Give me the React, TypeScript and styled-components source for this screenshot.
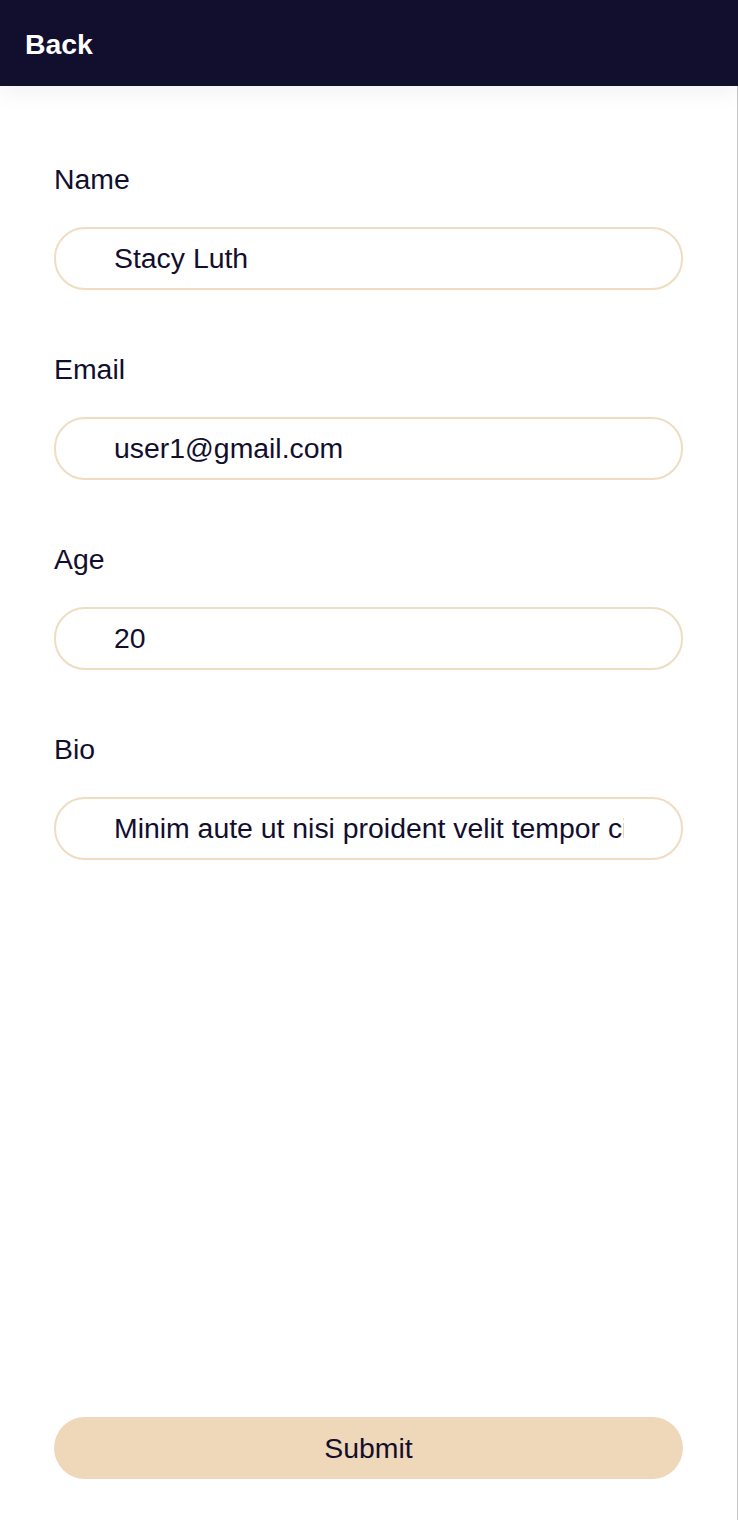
import React from "react";
import styled, { createGlobalStyle } from "styled-components";

const GlobalStyle = createGlobalStyle`
  html, body {
    margin: 0;
    padding: 0;
    background: #ffffff;
  }
  body {
    font-family: "Liberation Sans", Arial, Helvetica, sans-serif;
  }
  * { box-sizing: border-box; }
`;

const Page = styled.div`
  width: 738px;
  min-height: 1520px;
  display: flex;
  flex-direction: column;
  background: #ffffff;
`;

const Header = styled.header`
  height: 86px;
  background: #120e2e;
  display: flex;
  align-items: center;
  padding: 0 25px;
  box-shadow: 0 6px 22px rgba(0, 0, 0, 0.06);
  position: relative;
  z-index: 1;
`;

const BackLink = styled.a`
  color: #ffffff;
  font-weight: 700;
  font-size: 28.4px;
  line-height: 32px;
  text-decoration: none;
  margin-top: 2px;
  cursor: pointer;
`;

const Main = styled.main`
  flex: 1;
  display: flex;
  flex-direction: column;
  padding: 77px 54px 41px;
  border-right: 1px solid #c6c6c6;
`;

const Field = styled.div`
  display: flex;
  flex-direction: column;
  margin-bottom: 63px;
`;

const Label = styled.label`
  font-size: 28.4px;
  line-height: 32px;
  color: #120e2e;
  margin-bottom: 32px;
`;

const Input = styled.input`
  height: 63px;
  width: 100%;
  border: 2px solid #efdcc1;
  border-radius: 31px;
  padding: 0 57px 0 58px;
  font-family: "Liberation Sans", Arial, Helvetica, sans-serif;
  font-size: 28.4px;
  color: #120e2e;
  background: #ffffff;
  outline: none;
`;

const SubmitButton = styled.button`
  margin-top: auto;
  height: 62px;
  width: 100%;
  border: none;
  border-radius: 31px;
  background: #efd7b9;
  color: #120e2e;
  font-family: "Liberation Sans", Arial, Helvetica, sans-serif;
  font-size: 28.4px;
  cursor: pointer;
`;

const fields = [
  { id: "name", label: "Name", value: "Stacy Luth" },
  { id: "email", label: "Email", value: "user1@gmail.com" },
  { id: "age", label: "Age", value: "20" },
  {
    id: "bio",
    label: "Bio",
    value:
      "Minim aute ut nisi proident velit tempor cillum dolore esse ullamco consequat",
  },
];

export default function App() {
  return (
    <>
      <GlobalStyle />
      <Page>
        <Header>
          <BackLink>Back</BackLink>
        </Header>
        <Main>
          {fields.map((f) => (
            <Field key={f.id}>
              <Label htmlFor={f.id}>{f.label}</Label>
              <Input id={f.id} defaultValue={f.value} />
            </Field>
          ))}
          <SubmitButton type="button">Submit</SubmitButton>
        </Main>
      </Page>
    </>
  );
}
